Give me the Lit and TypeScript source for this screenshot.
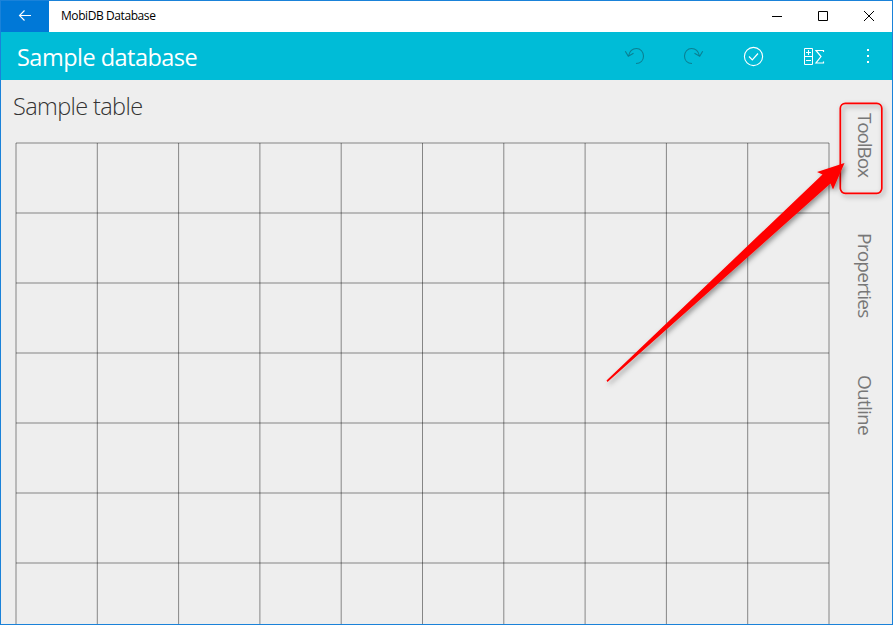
import { LitElement, html, svg, css } from "lit";
import { customElement } from "lit/decorators.js";

const COLS = 10;
const ROWS = 7;
const CELL_W = 81.3;
const CELL_H = 70;

@customElement("table-grid")
class TableGrid extends LitElement {
  static styles = css`
    :host { display: block; }
    svg { display: block; }
    line { stroke: #000; stroke-opacity: 0.44; stroke-width: 1; }
  `;
  render() {
    const cols = Array.from({ length: COLS + 1 }, (_, i) => 1 + i * CELL_W);
    const rows = Array.from({ length: ROWS }, (_, i) => 1 + i * CELL_H);
    return html`<svg width="816" height="482" viewBox="0 0 816 482">
      ${cols.map((x) => svg`<line x1=${x} x2=${x} y1="1" y2="482"></line>`)}
      ${rows.map((y) => svg`<line x1="1" x2="814" y1=${y} y2=${y}></line>`)}
    </svg>`;
  }
}

@customElement("app-root")
class AppRoot extends LitElement {
  static styles = css`
    :host {
      display: flex;
      flex-direction: column;
      position: relative;
      box-sizing: border-box;
      width: 893px;
      height: 625px;
      overflow: hidden;
      border: 1px solid #1a82d9;
      background: #eee;
      font-family: "Open Sans", "Noto Sans", sans-serif;
      white-space: nowrap;
    }
    svg { display: block; fill: none; }
    .titlebar { display: flex; height: 31px; flex: none; background: #fff; }
    .back { width: 48px; background: #0078d7; }
    .caption { flex: 1; padding-left: 12px; font-size: 12px; line-height: 30px; letter-spacing: -0.42px; color: #000; }
    .toolbar { display: flex; height: 48px; flex: none; background: #00bcd7; }
    .name { flex: 1; padding-left: 16px; font-size: 23.5px; line-height: 51px; letter-spacing: -0.52px; color: #fff; }
    .content { display: flex; flex: 1; min-height: 0; }
    .main { width: 831px; flex: none; overflow: hidden; }
    .heading { height: 62px; padding-left: 12px; font-size: 23.5px; line-height: 52px; font-weight: 300; letter-spacing: -0.62px; color: #333; }
    table-grid { margin-left: 14px; }
    .tabs { display: flex; flex-direction: column; align-items: flex-start; padding: 33px 0 0 19px; }
    .tab { writing-mode: vertical-rl; width: 28px; line-height: 28px; font-size: 19px; color: #777; }
    .toolbox { height: 120px; letter-spacing: -1.15px; }
    .properties { height: 142px; letter-spacing: -0.75px; }
    .outline { letter-spacing: -0.75px; }
    .annotation { position: absolute; left: -1px; top: -1px; pointer-events: none; }
  `;

  render() {
    return html`
      <div class="titlebar">
        <div class="back">
          <svg width="48" height="31" stroke="#fff" stroke-width="1.1"><path d="M18.500 14.500H30M23.500 9.500l-5 5 5 5"/></svg>
        </div>
        <div class="caption">MobiDB Database</div>
        <svg width="137" height="31" stroke="#000">
          <path d="M17 15.500H27"/>
          <path d="M63.500 10.500h9v9h-9z"/>
          <path d="M109 10l10 10M119 10l-10 10"/>
        </svg>
      </div>
      <div class="toolbar">
        <div class="name">Sample database</div>
        <svg width="282" height="48" viewBox="610 32 282 48" stroke="#fff">
          <g stroke="#0a7f92" stroke-width="1.1">
            <path d="M628.500 56C629.500 51.500 632.500 48.500 636.500 48.500C640.500 48.500 643.500 52 643.500 56C643.500 60.500 640.500 63.500 636 63.500M625.300 51.300L628.300 56.300L633.500 53.300"/>
            <path d="M699.500 56C698.500 51.500 695.500 48.500 691.500 48.500C687.500 48.500 684.500 52 684.500 56C684.500 60.500 687.500 63.500 692 63.500M702.700 51.300L699.700 56.300L694.500 53.300"/>
          </g>
          <circle cx="753.500" cy="56.500" r="9.100" stroke-width="1.1"/>
          <path d="M749 56.500l3.300 3.300 5.700-6.300" stroke-width="1.2"/>
          <path d="M804.500 48.500h8v16h-8zM804.500 56.500h8M806 52.500h5M808.500 50v5M806 60.500h5"/>
          <path d="M823.500 52v-1.500h-7.500l5 6-5 6.500h7.500v-1.500" stroke-width="1.2"/>
          <path d="M867 49h2v2h-2zM867 55h2v2h-2zM867 61h2v2h-2z" fill="#fff" stroke="none"/>
        </svg>
      </div>
      <div class="content">
        <div class="main">
          <div class="heading">Sample table</div>
          <table-grid></table-grid>
        </div>
        <div class="tabs">
          <div class="tab toolbox">ToolBox</div>
          <div class="tab properties">Properties</div>
          <div class="tab outline">Outline</div>
        </div>
      </div>
      <svg class="annotation" width="893" height="625">
        <defs>
          <filter id="shade" x="-20%" y="-20%" width="140%" height="140%">
            <feDropShadow dx="2" dy="2.500" stdDeviation="2.500" flood-color="#000" flood-opacity="0.4"/>
          </filter>
        </defs>
        <rect x="840.300" y="103.300" width="41.500" height="90" rx="5" stroke="#f00" stroke-width="1.700" filter="url(#shade)"/>
        <path d="M606.500 380.500L822.500 174.500L817 172L844.500 163L833 189.500L830.500 183.500L607.500 382z" fill="#f00" filter="url(#shade)"/>
      </svg>
    `;
  }
}
